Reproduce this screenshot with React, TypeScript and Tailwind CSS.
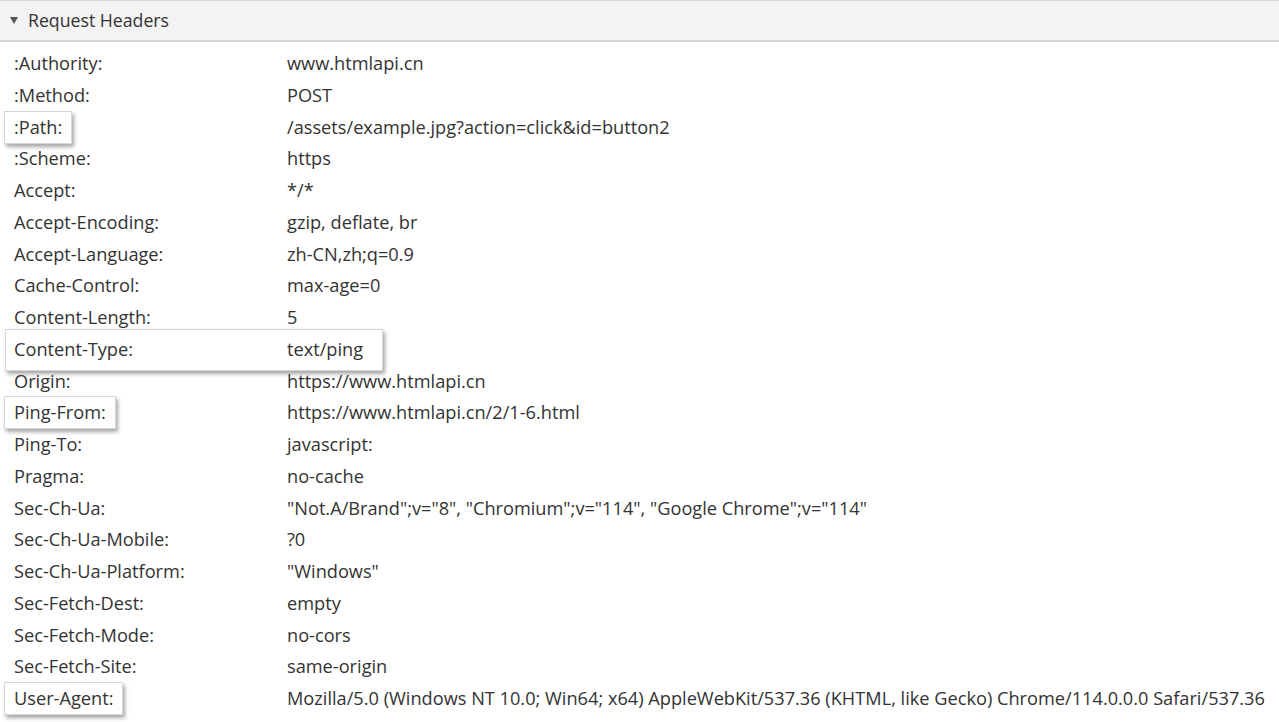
import React from "react";

type Row = { k: string; v: string; hl?: "key" | "both" };

const rows: Row[] = [
  { k: ":Authority:", v: "www.htmlapi.cn" },
  { k: ":Method:", v: "POST" },
  { k: ":Path:", v: "/assets/example.jpg?action=click&id=button2", hl: "key" },
  { k: ":Scheme:", v: "https" },
  { k: "Accept:", v: "*/*" },
  { k: "Accept-Encoding:", v: "gzip, deflate, br" },
  { k: "Accept-Language:", v: "zh-CN,zh;q=0.9" },
  { k: "Cache-Control:", v: "max-age=0" },
  { k: "Content-Length:", v: "5" },
  { k: "Content-Type:", v: "text/ping", hl: "both" },
  { k: "Origin:", v: "https://www.htmlapi.cn" },
  { k: "Ping-From:", v: "https://www.htmlapi.cn/2/1-6.html", hl: "key" },
  { k: "Ping-To:", v: "javascript:" },
  { k: "Pragma:", v: "no-cache" },
  { k: "Sec-Ch-Ua:", v: "\"Not.A/Brand\";v=\"8\", \"Chromium\";v=\"114\", \"Google Chrome\";v=\"114\"" },
  { k: "Sec-Ch-Ua-Mobile:", v: "?0" },
  { k: "Sec-Ch-Ua-Platform:", v: "\"Windows\"" },
  { k: "Sec-Fetch-Dest:", v: "empty" },
  { k: "Sec-Fetch-Mode:", v: "no-cors" },
  { k: "Sec-Fetch-Site:", v: "same-origin" },
  { k: "User-Agent:", v: "Mozilla/5.0 (Windows NT 10.0; Win64; x64) AppleWebKit/537.36 (KHTML, like Gecko) Chrome/114.0.0.0 Safari/537.36", hl: "key" },
];

function HeaderRow({ row }: { row: Row }) {
  return (
    <div className="relative flex h-[31.75px] items-center whitespace-nowrap">
      {/* callout box drawn behind the text */}
      {row.hl === "key" && (
        <span className="absolute left-[4px] -top-[1px] h-[33px] border border-[#d6d6d6] bg-white pl-[10px] pr-[8px] shadow-[2px_3px_4px_rgba(0,0,0,0.35)]">
          <span className="invisible">{row.k}</span>
        </span>
      )}
      {row.hl === "both" && (
        <span className="absolute left-[5px] w-[378px] top-[-5px] h-[42px] border border-[#d6d6d6] bg-white shadow-[2px_3px_4px_rgba(0,0,0,0.35)]" />
      )}
      <span className="relative w-[287px] shrink-0 pl-[14px]">{row.k}</span>
      <span className="relative">{row.v}</span>
    </div>
  );
}

export default function App() {
  return (
    <div
      className="h-[722px] w-[1279px] overflow-hidden bg-white text-[18.2px] text-[#333]"
      style={{ fontFamily: '"Open Sans", "Noto Sans", sans-serif' }}
    >
      <div className="flex h-[42px] items-center border-t border-b-2 border-[#d4d4d4] bg-[#f3f3f3] pl-[10px] text-[#333]">
        <svg width="8" height="7" viewBox="0 0 8 7" className="mr-[10px]">
          <path d="M0 0 H8 L4 7 Z" fill="#555" />
        </svg>
        <span className="text-[17.7px]">Request Headers</span>
      </div>
      <div className="pt-[6px]">
        {rows.map((r) => (
          <HeaderRow key={r.k} row={r} />
        ))}
      </div>
    </div>
  );
}
